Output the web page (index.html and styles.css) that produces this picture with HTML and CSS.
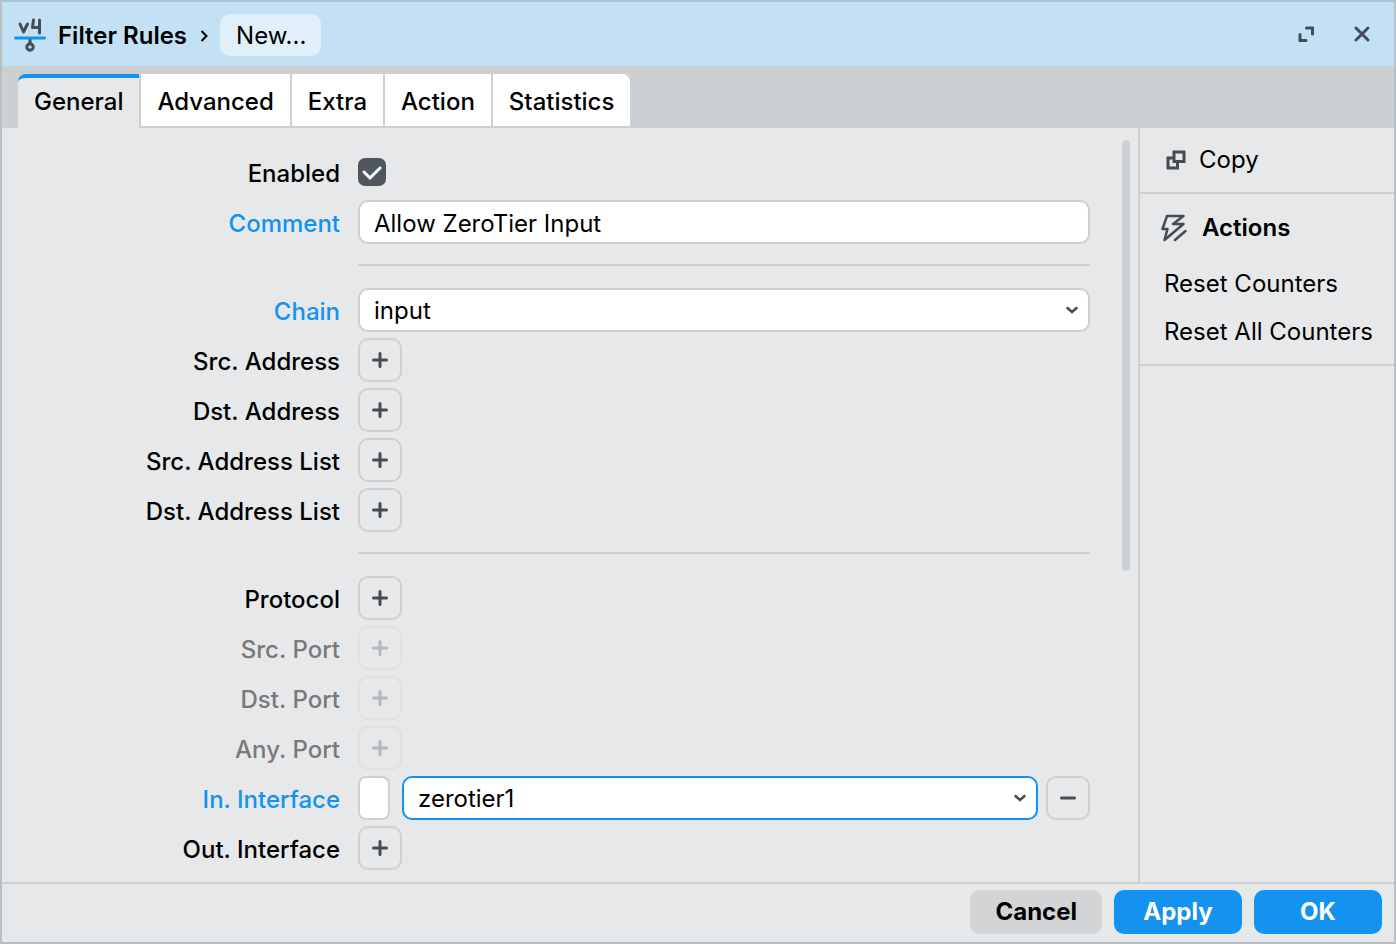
FILE: index.html
```html
<!DOCTYPE html>
<html lang="en">
<head>
    <meta charset="UTF-8">
    <meta name="viewport" content="width=device-width, initial-scale=1.0">
    <title>Filter Rules</title>
    <link rel="stylesheet" href="styles.css">
</head>
<body>
    <!-- shared icons -->
    <svg class="sprite" aria-hidden="true">
        <symbol id="plus" viewBox="0 0 16 16"><path d="M8 1.500v13M1.500 8h13"/></symbol>
        <symbol id="minus" viewBox="0 0 16 16"><path d="M1.500 8h13"/></symbol>
        <symbol id="chevron" viewBox="0 0 12 8"><path d="M1.500 2L6 6l4.500-4"/></symbol>
    </svg>

    <div class="window">
        <header class="titlebar">
            <svg class="logo" viewBox="0 0 32 36" aria-hidden="true">
                <path class="logo-mark" d="M6 8l3.500 8L13.500 8M19.500 4l-1 7.500h7M25.500 4v13"/>
                <path class="logo-mark" d="M16 23v5"/>
                <circle class="logo-mark" cx="16" cy="31" r="3.200"/>
                <path class="logo-line" d="M1.500 22h29"/>
            </svg>
            <h1 class="title">Filter Rules</h1>
            <svg class="crumb-arrow" viewBox="0 0 8 12" aria-hidden="true"><path d="M1.500 1l5 5-5 5"/></svg>
            <a class="crumb" href="#">New...</a>
            <div class="window-buttons">
                <button class="icon-button" aria-label="Expand">
                    <svg viewBox="0 0 18 18"><path d="M9.500 3h6v6M9 15.500H3v-6"/></svg>
                </button>
                <button class="icon-button" aria-label="Close">
                    <svg viewBox="0 0 18 18"><path d="M3 3l12 12M15 3L3 15"/></svg>
                </button>
            </div>
        </header>

        <nav class="tabs">
            <button class="tab active">General</button>
            <button class="tab">Advanced</button>
            <button class="tab">Extra</button>
            <button class="tab">Action</button>
            <button class="tab">Statistics</button>
        </nav>

        <main class="content">
            <form class="form" id="rule">
                <div class="row">
                    <label for="enabled">Enabled</label>
                    <div class="check">
                        <input type="checkbox" id="enabled" checked>
                        <svg viewBox="0 0 28 28" aria-hidden="true"><path d="M6 14l6 6L22 10"/></svg>
                    </div>
                </div>
                <div class="row changed">
                    <label for="comment">Comment</label>
                    <input class="field" type="text" id="comment" value="Allow ZeroTier Input">
                </div>
                <hr>
                <div class="row changed">
                    <label for="chain">Chain</label>
                    <div class="select">
                        <select class="field" id="chain"><option>input</option></select>
                        <svg aria-hidden="true"><use href="#chevron"/></svg>
                    </div>
                </div>
                <div class="row">
                    <label for="src-address">Src. Address</label>
                    <button class="square" type="button" id="src-address"><svg><use href="#plus"/></svg></button>
                </div>
                <div class="row">
                    <label for="dst-address">Dst. Address</label>
                    <button class="square" type="button" id="dst-address"><svg><use href="#plus"/></svg></button>
                </div>
                <div class="row">
                    <label for="src-list">Src. Address List</label>
                    <button class="square" type="button" id="src-list"><svg><use href="#plus"/></svg></button>
                </div>
                <div class="row">
                    <label for="dst-list">Dst. Address List</label>
                    <button class="square" type="button" id="dst-list"><svg><use href="#plus"/></svg></button>
                </div>
                <hr>
                <div class="row">
                    <label for="protocol">Protocol</label>
                    <button class="square" type="button" id="protocol"><svg><use href="#plus"/></svg></button>
                </div>
                <div class="row disabled">
                    <label for="src-port">Src. Port</label>
                    <button class="square" type="button" id="src-port" disabled><svg><use href="#plus"/></svg></button>
                </div>
                <div class="row disabled">
                    <label for="dst-port">Dst. Port</label>
                    <button class="square" type="button" id="dst-port" disabled><svg><use href="#plus"/></svg></button>
                </div>
                <div class="row disabled">
                    <label for="any-port">Any. Port</label>
                    <button class="square" type="button" id="any-port" disabled><svg><use href="#plus"/></svg></button>
                </div>
                <div class="row changed">
                    <label for="in-interface">In. Interface</label>
                    <div class="group">
                        <input class="negate" type="checkbox" aria-label="Not">
                        <div class="select">
                            <select class="field focused" id="in-interface"><option>zerotier1</option></select>
                            <svg aria-hidden="true"><use href="#chevron"/></svg>
                        </div>
                        <button class="square" type="button" aria-label="Remove"><svg><use href="#minus"/></svg></button>
                    </div>
                </div>
                <div class="row">
                    <label for="out-interface">Out. Interface</label>
                    <button class="square" type="button" id="out-interface"><svg><use href="#plus"/></svg></button>
                </div>
            </form>

            <div class="scrollbar"><div class="thumb"></div></div>

            <aside class="sidebar">
                <section class="copy">
                    <button class="side-button">
                        <svg class="copy-icon" viewBox="0 0 20 20" aria-hidden="true"><path d="M8 2h10v9.500H8zM8 8H2v10h9.500v-6.500"/></svg>
                        Copy
                    </button>
                </section>
                <section class="actions">
                    <h2>
                        <svg class="bolt-icon" viewBox="0 0 26 28" aria-hidden="true"><path d="M6 2h16.500L12 10h10.500L3.500 26 6.500 15h-5zM14 26l10.500-9"/></svg>
                        Actions
                    </h2>
                    <button class="side-button">Reset Counters</button>
                    <button class="side-button">Reset All Counters</button>
                </section>
            </aside>
        </main>

        <footer class="footer">
            <button class="button cancel">Cancel</button>
            <button class="button primary">Apply</button>
            <button class="button primary" type="submit" form="rule">OK</button>
        </footer>
    </div>
</body>
</html>
```
FILE: styles.css
```css
:root {
    --blue: #1392f0;
    --line: #cdd0d2;
    --panel: #e6e8ea;
    --icon: #444c55;
}

* {
    box-sizing: border-box;
}

body {
    margin: 0;
    font-family: Inter, "Open Sans", sans-serif;
    font-size: 24px;
    line-height: 32px;
    color: #000;
}

button,
input,
select {
    font: inherit;
    color: inherit;
}

button {
    border: none;
    padding: 0;
    background: none;
    cursor: pointer;
}

svg {
    display: block;
    fill: none;
    stroke: var(--icon);
    stroke-width: 3;
}

.sprite {
    display: none;
}

.window {
    display: flex;
    flex-direction: column;
    min-height: 100vh;
    border: 2px solid #b9c0c5;
    border-top-color: #a9c2d4;
    background: var(--panel);
}

/* title bar */
.titlebar {
    display: flex;
    align-items: center;
    height: 64px;
    padding: 0 20px 0 12px;
    background: #c4e0f5;
}

.logo {
    width: 32px;
    height: 36px;
}

.logo-mark {
    stroke-linecap: round;
    stroke-linejoin: round;
}

.logo-line {
    stroke: var(--blue);
    stroke-linecap: round;
}

.title {
    margin: 0 13px 0 12px;
    padding-top: 3px;
    font-size: 24px;
    font-weight: 600;
}

.crumb-arrow {
    width: 8px;
    height: 12px;
    margin-top: 4px;
    stroke: #000;
    stroke-width: 2;
}

.crumb {
    margin: 2px 0 0 12px;
    padding: 6px 15px 4px 16px;
    border-radius: 10px;
    background: #e1eff9;
    color: inherit;
    text-decoration: none;
}

.window-buttons {
    display: flex;
    gap: 32px;
    margin-left: auto;
}

.icon-button {
    padding: 3px;
}

.icon-button svg {
    width: 18px;
    height: 18px;
    stroke-linecap: round;
}

/* tabs */
.tabs {
    display: flex;
    gap: 2px;
    height: 62px;
    padding: 8px 16px 0;
    background: var(--line);
}

.tab {
    padding: 3px 16px 0;
    border-bottom: 2px solid var(--line);
    background: #fff;
    font-weight: 500;
}

.tab.active {
    padding-top: 0;
    border-top: 4px solid var(--blue);
    border-bottom-color: var(--panel);
    border-top-left-radius: 8px;
    background: var(--panel);
}

.tab:last-child {
    border-top-right-radius: 8px;
}

/* form */
.content {
    display: flex;
    flex: 1;
}

.form {
    display: flex;
    flex: 1;
    flex-direction: column;
    gap: 6px;
    padding: 22px 32px 12px 16px;
}

.row {
    display: grid;
    grid-template-columns: 322px 1fr;
    gap: 18px;
    align-items: center;
    min-height: 44px;
}

.row label {
    padding-top: 3px;
    font-weight: 500;
    text-align: right;
}

.row.changed label {
    color: var(--blue);
}

.row.disabled label {
    color: #77797b;
}

.form hr {
    width: calc(100% - 340px);
    margin: 14px 0 16px 340px;
    border: none;
    border-top: 2px solid var(--line);
}

.field {
    width: 100%;
    height: 44px;
    padding: 2px 14px 0;
    border: 2px solid var(--line);
    border-radius: 10px;
    background: #fff;
    appearance: none;
    outline: none;
}

.field.focused {
    border-color: var(--blue);
}

.select {
    position: relative;
    flex: 1;
}

.select svg {
    position: absolute;
    top: 18px;
    right: 12px;
    width: 12px;
    height: 8px;
    stroke-width: 2.5;
    stroke-linecap: round;
    pointer-events: none;
}

.check {
    position: relative;
    width: 28px;
    height: 28px;
}

.check input {
    display: block;
    width: 28px;
    height: 28px;
    margin: 0;
    border-radius: 7px;
    background: #4e5660;
    appearance: none;
}

.check svg {
    position: absolute;
    inset: 0;
    stroke: #fff;
    stroke-linecap: round;
    pointer-events: none;
}

.square {
    display: flex;
    align-items: center;
    justify-content: center;
    width: 44px;
    height: 44px;
    border: 2px solid var(--line);
    border-radius: 10px;
}

.square svg {
    width: 16px;
    height: 16px;
    stroke-linecap: round;
}

.square:disabled {
    opacity: 0.3;
}

.group {
    display: flex;
}

.negate {
    width: 32px;
    height: 44px;
    margin: 0 12px 0 0;
    border: 2px solid var(--line);
    border-radius: 8px;
    background: #fff;
    appearance: none;
}

.group .square {
    margin-left: 8px;
}

.scrollbar {
    padding: 12px 8px 12px 0;
}

.thumb {
    width: 8px;
    height: 431px;
    border-radius: 4px;
    background: #cdd1d4;
}

/* sidebar */
.sidebar {
    width: 256px;
    border-left: 2px solid var(--line);
}

.copy,
.actions {
    border-bottom: 2px solid var(--line);
}

.copy {
    padding: 8px 0;
}

.side-button {
    display: flex;
    align-items: center;
    width: 100%;
    height: 48px;
    padding-left: 24px;
    white-space: nowrap;
}

.copy-icon {
    width: 20px;
    height: 20px;
    margin: 0 13px 0 2px;
}

.actions {
    padding: 10px 0 8px;
}

.actions h2 {
    display: flex;
    align-items: center;
    height: 48px;
    margin: 0 0 8px;
    padding-left: 21px;
    font-size: 24px;
    font-weight: 600;
}

.bolt-icon {
    width: 26px;
    height: 28px;
    margin-right: 15px;
    stroke-width: 2.5;
    stroke-linecap: round;
    stroke-linejoin: round;
}

/* footer */
.footer {
    display: flex;
    justify-content: flex-end;
    gap: 12px;
    padding: 6px 12px 8px;
    border-top: 2px solid var(--line);
}

.button {
    min-width: 128px;
    height: 44px;
    padding: 0 25px;
    border-radius: 10px;
    font-weight: 700;
}

.cancel {
    background: #d2d4d6;
}

.primary {
    background: var(--blue);
    color: #fff;
}
```
